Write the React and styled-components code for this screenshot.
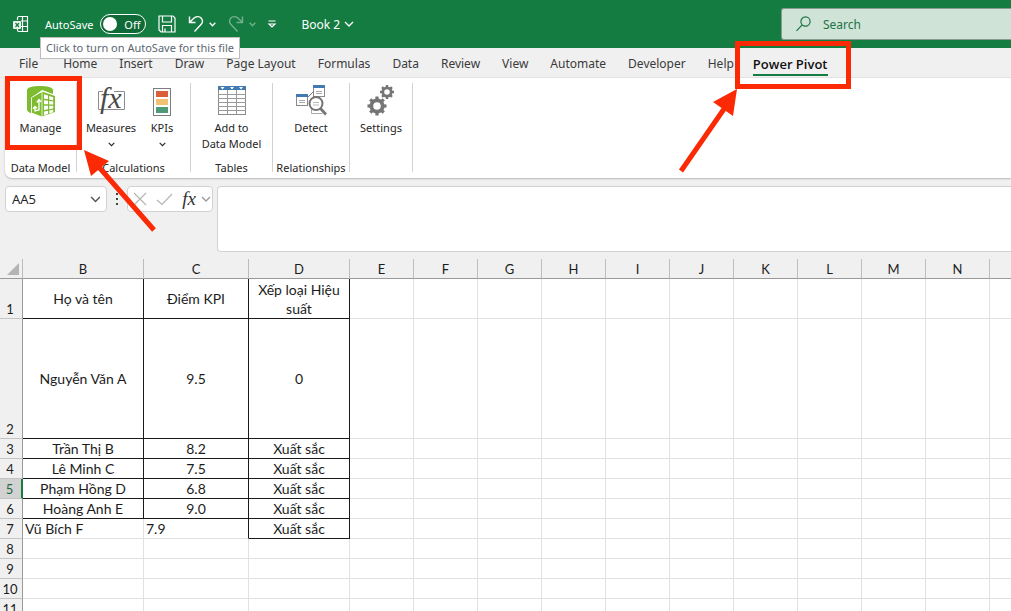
import React, { useState } from 'react';
import styled, { createGlobalStyle } from 'styled-components';

const GlobalStyle = createGlobalStyle`
  * {
    box-sizing: border-box;
  }

  body {
    margin: 0;
    background: #f0f0f0;
    font-family: 'Noto Sans', 'Open Sans', sans-serif;
    color: #262626;
  }

  button, input, textarea {
    font: inherit;
    color: inherit;
  }

  button {
    padding: 0;
    border: none;
    background: none;
    cursor: pointer;
  }

  svg {
    display: block;
    flex: none;
    overflow: visible;
  }
`;

const Page = styled.div`
  position: relative;
  display: flex;
  flex-direction: column;
  height: 100vh;
  overflow: hidden;
`;

/* ---------- title bar ---------- */

const TitleBar = styled.header`
  display: flex;
  align-items: center;
  height: 48px;
  padding-left: 13px;
  background: #147c41;
  color: #fff;
  font-size: 11px;
`;

const AutoSave = styled.label`
  position: relative;
  display: flex;
  align-items: center;
  gap: 7px;
  margin-left: 16px;
  white-space: nowrap;
  cursor: pointer;
`;

const AutoSaveInput = styled.input`
  position: absolute;
  opacity: 0;
  width: 1px;
  height: 1px;
  margin: 0;
`;

const Pill = styled.span`
  display: flex;
  align-items: center;
  justify-content: space-between;
  flex-direction: ${({ $on }) => ($on ? 'row-reverse' : 'row')};
  width: 46px;
  height: 20px;
  padding: 0 5px 0 2px;
  border: 1px solid #fff;
  border-radius: 10px;
  background: #0f6a37;
`;

const Knob = styled.span`
  width: 14px;
  height: 14px;
  border-radius: 50%;
  background: #fff;
`;

const Tooltip = styled.span`
  position: absolute;
  top: 23px;
  left: -5px;
  z-index: 5;
  height: 22px;
  padding: 0 5px;
  border: 1px solid #bdbdbd;
  background: #fff;
  color: #5c6670;
  font-size: 11px;
  line-height: 20px;
`;

const QuickAccess = styled.div`
  display: flex;
  align-items: center;
  gap: 12px;
  margin-left: 12px;
`;

const QuickButton = styled.button`
  display: flex;
  align-items: center;
  gap: 5px;
  opacity: ${({ disabled }) => (disabled ? 0.4 : 1)};
`;

const BookButton = styled.button`
  display: flex;
  align-items: center;
  gap: 4px;
  margin-left: 25px;
  font-size: 12px;
  white-space: nowrap;
`;

const SearchBox = styled.label`
  display: flex;
  flex: 1;
  align-items: center;
  gap: 12px;
  height: 32px;
  margin-left: auto;
  padding-left: 14px;
  max-width: calc(100% - 781px + 13px);
  border: 1px solid #8a9c90;
  border-right: none;
  border-radius: 3px 0 0 3px;
  background: #cfe3d7;
  color: #1c7344;
`;

const SearchInput = styled.input`
  flex: 1;
  min-width: 0;
  padding: 0;
  border: none;
  outline: none;
  background: transparent;
  font-size: 12px;

  &::placeholder {
    color: #1c7344;
    opacity: 1;
  }
`;

/* ---------- tabs ---------- */

const TabBar = styled.nav`
  display: flex;
  height: 30px;
  padding-left: 8px;
  border-bottom: 1px solid #e4e4e4;
  font-size: 12px;
`;

const Tab = styled.button`
  padding: 0 11px 0 ${({ $active }) => ($active ? 8 : 11)}px;
  white-space: nowrap;
  color: ${({ $active }) => ($active ? '#111' : '#3a3a3a')};
  font-family: ${({ $active }) => ($active ? "'Open Sans', sans-serif" : 'inherit')};
  font-size: ${({ $active }) => ($active ? 13 : 12)}px;
  font-weight: ${({ $active }) => ($active ? 600 : 400)};

  &:first-child {
    padding-right: 14px;
  }

  span {
    display: block;
    height: 24px;
    margin-top: 3px;
    line-height: 24px;
    border-bottom: 2px solid ${({ $active }) => ($active ? '#147c41' : 'transparent')};
  }
`;

/* ---------- ribbon ---------- */

const Ribbon = styled.section`
  display: flex;
  height: 100px;
  margin-left: 5px;
  padding: 5px 0 6px;
  border-radius: 0 0 0 7px;
  background: #fff;
  box-shadow: 0 1px 2px #b8b8b8;
  font-size: 11px;
`;

const Group = styled.div`
  display: flex;
  flex-direction: column;
  justify-content: space-between;
  align-items: center;
  width: ${({ $width }) => $width}px;
  border-right: 1px solid #d2d2d2;
  white-space: nowrap;
`;

const GroupTools = styled.div`
  display: flex;
  align-items: flex-start;
`;

const GroupName = styled.div`
  height: 8px;
  line-height: 8px;
`;

const Tool = styled.button`
  display: flex;
  flex-direction: column;
  align-items: center;
  width: ${({ $width }) => ($width ? `${$width}px` : 'auto')};
  padding-top: 2px;
  line-height: 16px;

  > svg:first-child {
    margin-bottom: 3px;
  }

  > svg + span + svg {
    margin-top: 6px;
  }
`;

/* ---------- formula bar ---------- */

const FormulaBar = styled.div`
  display: flex;
  align-items: flex-start;
  height: 81px;
  padding: 8px 0 0 5px;
`;

const boxed = `
  border: 1px solid #d2d2d2;
  border-radius: 4px;
  background: #fff;
`;

const NameBox = styled.div`
  ${boxed}
  display: flex;
  align-items: center;
  width: 102px;
  height: 26px;
  padding: 0 5px 0 6px;
`;

const NameInput = styled.input`
  flex: 1;
  min-width: 0;
  padding: 0;
  border: none;
  outline: none;
  background: transparent;
  font-size: 13px;
`;

const Grip = styled.div`
  display: flex;
  flex-direction: column;
  justify-content: center;
  gap: 3px;
  width: 20px;
  height: 26px;
  padding-left: 9px;

  i {
    width: 2px;
    height: 2px;
    background: #444;
  }
`;

const FormulaTools = styled.div`
  ${boxed}
  display: flex;
  align-items: center;
  justify-content: space-between;
  width: 86px;
  height: 26px;
  padding: 0 1px 0 5px;
`;

const FxButton = styled.button`
  display: flex;
  align-items: center;
  gap: 5px;
  font-family: 'Liberation Serif', serif;
  font-style: italic;
  font-size: 19px;
  line-height: 20px;
  color: #333;
`;

const FormulaInput = styled.textarea`
  ${boxed}
  flex: 1;
  height: 66px;
  margin-left: 4px;
  border-right: none;
  border-radius: 4px 0 0 4px;
  outline: none;
  resize: none;
`;

/* ---------- sheet ---------- */

const SheetArea = styled.main`
  flex: 1;
  min-height: 0;
  overflow: hidden;
  background: #fff;
`;

const Sheet = styled.table`
  width: 100%;
  table-layout: fixed;
  border-spacing: 0;
  font-family: Lato, 'Open Sans', sans-serif;
  font-size: 14px;
  line-height: 19px;
  color: #1c1c1c;
`;

const Col = styled.col`
  width: ${({ $width }) => ($width ? `${$width}px` : 'auto')};
`;

const Row = styled.tr`
  height: ${({ $height }) => $height}px;
`;

const ColHead = styled.th`
  padding: 1px 0 0;
  border-right: 1px solid #bcbcbc;
  border-bottom: 1px solid #999;
  background: #f0f0f0;
  font-size: 13px;
  font-weight: normal;
  line-height: 18px;

  &:last-child {
    border-right: none;
  }
`;

const Corner = styled(ColHead)`
  vertical-align: bottom;

  svg {
    margin: 0 0 3px 7px;
  }
`;

const RowHead = styled.th`
  padding: 1px 2px 0 0;
  border-right: ${({ $active }) => ($active ? '2px solid #147c41' : '1px solid #999')};
  border-bottom: 1px solid #c4c4c4;
  background: ${({ $active }) => ($active ? '#d2d2d2' : '#f0f0f0')};
  color: ${({ $active }) => ($active ? '#1c6b41' : 'inherit')};
  font-size: 13px;
  font-weight: normal;
  line-height: 18px;
  vertical-align: bottom;
`;

const Cell = styled.td`
  padding: 0 2px;
  border-right: 1px solid ${({ $right }) => ($right ? '#1a1a1a' : '#e1e1e1')};
  border-bottom: 1px solid ${({ $bottom }) => ($bottom ? '#1a1a1a' : '#e1e1e1')};
  background: #fff;
  text-align: ${({ $left }) => ($left ? 'left' : 'center')};

  &:last-child {
    border-right: none;
  }
`;

/* ---------- highlights drawn over the window ---------- */

const Marks = styled.svg`
  position: absolute;
  top: 0;
  left: 0;
  z-index: 10;
  pointer-events: none;
`;

/* ---------- icons ---------- */

const Chevron = ({ size = 8, color = 'currentColor', width = 1.3 }) => (
  <svg width={size} height={size / 2 + 1} viewBox="0 0 10 6" fill="none" stroke={color} strokeWidth={width}>
    <path d="M1 1l4 4 4-4" />
  </svg>
);

const ExcelIcon = () => (
  <svg width="16" height="18" viewBox="0 0 16 18" fill="none" stroke="#fff" strokeWidth="1.2">
    <path d="M4.5 5V3q0-1.5 1.5-1.5h8.500v15H6Q4.500 16.500 4.500 15v-1M9.500 1.500v15M8 6h7M8 11.500h7" />
    <rect x="0" y="6" width="8" height="8" rx="1" fill="#e9f4ed" stroke="none" />
    <path d="M2.500 8l3.500 4M6 8l-3.500 4" stroke="#147c41" />
  </svg>
);

const SaveIcon = () => (
  <svg width="18" height="18" viewBox="0 0 18 18" fill="none" stroke="#fff" strokeWidth="1.2">
    <path d="M1 1h14l2 2v14H3l-2-2z" />
    <path d="M4.500 1v6h9V1M4.500 17v-6.500h9V17M7 17v-3.500" />
  </svg>
);

const UndoIcon = () => (
  <svg width="16" height="18" viewBox="0 0 16 18" fill="none" stroke="#fff" strokeWidth="1.4">
    <path d="M1.500 1.500v6h6M1.500 7.500L5.500 3.500C8 1 11.500 1 13.300 3.200 15 5.500 14.500 8 13 9.600L6.500 16.500" />
  </svg>
);

const RedoIcon = () => (
  <svg width="16" height="18" viewBox="0 0 16 18" fill="none" stroke="#fff" strokeWidth="1.4">
    <path d="M14.500 1.500v6h-6M14.500 7.500L10.500 3.500C8 1 4.500 1 2.700 3.200 1 5.500 1.500 8 3 9.600L9.500 16.500" />
  </svg>
);

const MoreIcon = () => (
  <svg width="8" height="8" viewBox="0 0 8 8" fill="none" stroke="#fff" strokeWidth="1.2">
    <path d="M.5 1h7M1 4h6L4 7z" />
  </svg>
);

const SearchIcon = () => (
  <svg width="15" height="16" viewBox="0 0 15 16" fill="none" stroke="#1c7344" strokeWidth="1.2">
    <circle cx="9.500" cy="5.500" r="4.600" />
    <path d="M6.200 8.800L.5 14.800" />
  </svg>
);

const ManageIcon = () => (
  <svg width="30" height="32" viewBox="0 0 30 32">
    <path d="M1 5c0-5.500 26-5.500 26 0v4L16 5 5 13v15Q1 27 1 24z" fill="#7dbb2f" />
    <path d="M5.500 12.500L16 6.500 29 11v16l-13 4.500-10.500-4z" fill="#7dbb2f" />
    <path d="M5.500 27.500v-15L16 6.500v25" fill="none" stroke="#fff" strokeWidth=".8" />
    <g fill="#fff">
      <path d="M18 9.300l4 1.200v3.800l-4-.6zM23.200 10.900l4 1.300v3.200l-4-.8zM18 15.200l4 .5v3.600h-4zM23.200 16l4 .4v3h-4zM18 20.800h4v3.500l-4 .7zM23.200 20.700h4v2.900l-4 .6zM18 26.500l4-.8v3.200l-4 1.300zM23.200 25.500l4-.8v2.600l-4 1.300z" />
    </g>
    <path d="M9 22v4l4-1v-9.500M10.800 17.500l2.200-3 2.200 2.200M7 24l2-2.500 2 1.800" fill="none" stroke="#fff" strokeWidth="1.3" />
  </svg>
);

const MeasuresIcon = () => (
  <svg width="30" height="32" viewBox="0 0 30 32">
    <path d="M7 6.500H2.500v18H28.500v-18H18" fill="#fff" stroke="#8c8c8c" />
    <text
      x="4"
      y="23"
      fontFamily="Liberation Serif, serif"
      fontStyle="italic"
      fontSize="30"
      fill="#4a4a4a"
    >
      fx
    </text>
  </svg>
);

const KpiIcon = () => (
  <svg width="20" height="32" viewBox="0 0 20 32">
    <rect x="1.500" y="3.500" width="17" height="27" fill="#fff" stroke="#7d7d7d" />
    <rect x="4" y="6" width="12" height="6" fill="#d9603a" />
    <rect x="4" y="14" width="12" height="6" fill="#f2c173" />
    <rect x="4" y="22" width="12" height="6" fill="#4f9a78" />
  </svg>
);

const TableIcon = () => (
  <svg width="30" height="32" viewBox="0 0 30 32">
    <rect x="1.500" y="1.500" width="27" height="28" fill="#fff" stroke="#8a8a8a" />
    <path d="M1 9.500h28M1 13.500h28M1 17.500h28M1 21.500h28M1 25.500h28M10.500 5v25M19.500 5v25" stroke="#9a9a9a" />
    <rect x="1" y="1" width="28" height="4" fill="#4179b3" />
    <path d="M3.500 2h4l-2 2.500zM13 2h4l-2 2.500zM22 2h4l-2 2.500z" fill="#fff" />
  </svg>
);

const DetectIcon = () => (
  <svg width="32" height="32" viewBox="0 0 32 32">
    <path d="M12 13l7-7" stroke="#777" />
    <rect x="18.500" y=".5" width="11" height="11" fill="#fff" stroke="#8a8a8a" />
    <path d="M18 0h12v3H18z" fill="#4179b3" />
    <path d="M21 6.500h6M21 8.500h6M4 15.500h6M4 17.500h6" stroke="#aaa" />
    <rect x="1.500" y="9.500" width="11" height="11" fill="none" stroke="#8a8a8a" />
    <path d="M1 9h12v3H1z" fill="#4179b3" />
    <path d="M16.500 24v4.500h11" fill="none" stroke="#aaa" />
    <circle cx="21" cy="18.500" r="6.500" fill="#fff" stroke="#747474" strokeWidth="2" />
    <path d="M18 17.500h6M18 20h6" stroke="#bbb" />
    <path d="M25.500 23.500l5.500 6" stroke="#747474" strokeWidth="2.6" />
  </svg>
);

const GEAR_TEETH = [0, 45, 90, 135, 180, 225, 270, 315];

const Gear = ({ x, y, r }) => (
  <g transform={`translate(${x} ${y})`}>
    <circle r={r * 0.6} fill="none" stroke="#757575" strokeWidth={r * 0.4} />
    {GEAR_TEETH.map((angle) => (
      <rect
        key={angle}
        x={-r * 0.17}
        y={-r}
        width={r * 0.34}
        height={r * 0.3}
        fill="#757575"
        transform={`rotate(${angle})`}
      />
    ))}
  </g>
);

const SettingsIcon = () => (
  <svg width="28" height="32" viewBox="0 0 28 32">
    <Gear x={10} y={21} r={9.5} />
    <Gear x={20} y={7} r={7} />
  </svg>
);

/* ---------- data ---------- */

const TABS = [
  'File', 'Home', 'Insert', 'Draw', 'Page Layout', 'Formulas', 'Data',
  'Review', 'View', 'Automate', 'Developer', 'Help', 'Power Pivot',
];

const COLUMNS = 'BCDEFGHIJKLMN'.split('');
const COLUMN_WIDTHS = { B: 121, C: 105, D: 101 };

const RECORDS = {
  1: ['Họ và tên', 'Điểm KPI', 'Xếp loại Hiệu suất'],
  2: ['Nguyễn Văn A', '9.5', '0'],
  3: ['Trần Thị B', '8.2', 'Xuất sắc'],
  4: ['Lê Minh C', '7.5', 'Xuất sắc'],
  5: ['Phạm Hồng D', '6.8', 'Xuất sắc'],
  6: ['Hoàng Anh E', '9.0', 'Xuất sắc'],
  7: ['Vũ Bích F', '7.9', 'Xuất sắc'],
};

const ROW_HEIGHTS = { 1: 40, 2: 120 };
const ROWS = Array.from({ length: 11 }, (_, i) => i + 1);
const ACTIVE_ROW = 5;

const SheetRow = ({ number }) => {
  const values = RECORDS[number] || [];

  return (
    <Row $height={ROW_HEIGHTS[number] || 20}>
      <RowHead scope="row" $active={number === ACTIVE_ROW}>{number}</RowHead>
      {COLUMNS.map((name, i) => {
        // the last record only has a frame round its rating
        const framed = i < 3 && number <= 7;
        return (
          <Cell
            key={name}
            $right={framed && (number < 7 || i > 0)}
            $bottom={framed && (number < 7 || i === 2)}
            $left={number === 7 && i < 2}
          >
            {values[i]}
          </Cell>
        );
      })}
      <Cell />
    </Row>
  );
};

const App = () => {
  const [autoSave, setAutoSave] = useState(false);
  const [activeTab, setActiveTab] = useState('Power Pivot');

  return (
    <Page>
      <GlobalStyle />

      <TitleBar>
        <ExcelIcon />
        <AutoSave>
          AutoSave
          <AutoSaveInput type="checkbox" checked={autoSave} onChange={(e) => setAutoSave(e.target.checked)} />
          <Pill $on={autoSave}>
            <Knob />
            {autoSave ? 'On' : 'Off'}
          </Pill>
          <Tooltip role="tooltip">Click to turn on AutoSave for this file</Tooltip>
        </AutoSave>
        <QuickAccess>
          <QuickButton aria-label="Save"><SaveIcon /></QuickButton>
          <QuickButton aria-label="Undo"><UndoIcon /><Chevron size={7} width={2} /></QuickButton>
          <QuickButton aria-label="Redo" disabled><RedoIcon /><Chevron size={7} width={2} /></QuickButton>
          <QuickButton aria-label="Customize toolbar"><MoreIcon /></QuickButton>
        </QuickAccess>
        <BookButton>Book 2 <Chevron size={10} /></BookButton>
        <SearchBox>
          <SearchIcon />
          <SearchInput type="text" placeholder="Search" aria-label="Search" />
        </SearchBox>
      </TitleBar>

      <TabBar>
        {TABS.map((tab) => (
          <Tab key={tab} $active={tab === activeTab} onClick={() => setActiveTab(tab)}>
            <span>{tab}</span>
          </Tab>
        ))}
      </TabBar>

      <Ribbon>
        <Group $width={72}>
          <GroupTools>
            <Tool><ManageIcon /><span>Manage</span></Tool>
          </GroupTools>
          <GroupName>Data Model</GroupName>
        </Group>
        <Group $width={114}>
          <GroupTools>
            <Tool $width={57}><MeasuresIcon /><span>Measures</span><Chevron size={7} width={1.6} /></Tool>
            <Tool $width={45}><KpiIcon /><span>KPIs</span><Chevron size={7} width={1.6} /></Tool>
          </GroupTools>
          <GroupName>Calculations</GroupName>
        </Group>
        <Group $width={82}>
          <GroupTools>
            <Tool><TableIcon /><span>Add to<br />Data Model</span></Tool>
          </GroupTools>
          <GroupName>Tables</GroupName>
        </Group>
        <Group $width={77}>
          <GroupTools>
            <Tool><DetectIcon /><span>Detect</span></Tool>
          </GroupTools>
          <GroupName>Relationships</GroupName>
        </Group>
        <Group $width={63}>
          <GroupTools>
            <Tool><SettingsIcon /><span>Settings</span></Tool>
          </GroupTools>
        </Group>
      </Ribbon>

      <FormulaBar>
        <NameBox>
          <NameInput type="text" defaultValue="AA5" aria-label="Name box" />
          <Chevron size={11} color="#555" />
        </NameBox>
        <Grip><i /><i /><i /></Grip>
        <FormulaTools>
          <button aria-label="Cancel">
            <svg width="14" height="14" viewBox="0 0 14 14" stroke="#b5b5b5" strokeWidth="1.2">
              <path d="M1 1l12 12M13 1L1 13" />
            </svg>
          </button>
          <button aria-label="Enter">
            <svg width="17" height="14" viewBox="0 0 17 14" fill="none" stroke="#b5b5b5" strokeWidth="1.2">
              <path d="M1 8l5 4.500L16 2" />
            </svg>
          </button>
          <FxButton aria-label="Insert function">fx<Chevron size={10} color="#999" /></FxButton>
        </FormulaTools>
        <FormulaInput aria-label="Formula" />
      </FormulaBar>

      <SheetArea>
        <Sheet>
          <colgroup>
            <Col $width={23} />
            {COLUMNS.map((name) => (
              <Col key={name} $width={COLUMN_WIDTHS[name] || 64} />
            ))}
            <Col />
          </colgroup>
          <thead>
            <Row $height={20}>
              <Corner aria-label="Select all">
                <svg width="12" height="12" viewBox="0 0 12 12"><path d="M12 0v12H0z" fill="#b4b4b4" /></svg>
              </Corner>
              {COLUMNS.map((name) => (
                <ColHead key={name} scope="col">{name}</ColHead>
              ))}
              <ColHead />
            </Row>
          </thead>
          <tbody>
            {ROWS.map((number) => (
              <SheetRow key={number} number={number} />
            ))}
          </tbody>
        </Sheet>
      </SheetArea>

      <Marks width="860" height="240" viewBox="0 0 860 240" fill="none" stroke="#fb2a04" strokeWidth="5" aria-hidden="true">
        <rect x="7.500" y="78.500" width="72" height="69" />
        <rect x="737.500" y="43.500" width="111" height="43" />
        <path d="M154 230L98 166M681 171l43-62" />
        <path d="M84 150l25 11-18 15zM737 89l-24 13 20 14z" fill="#fb2a04" stroke="none" />
      </Marks>
    </Page>
  );
};

export default App;
